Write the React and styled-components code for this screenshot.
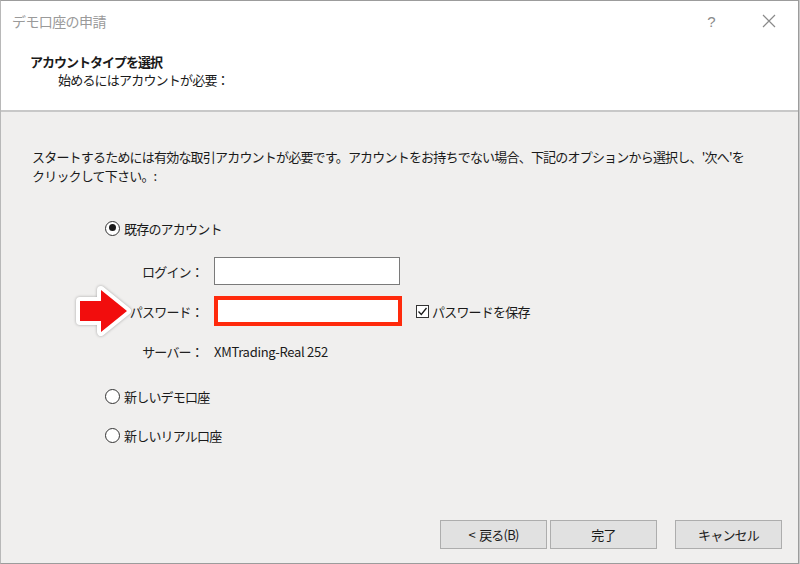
import React from "react";
import styled, { createGlobalStyle } from "styled-components";

const GlobalStyle = createGlobalStyle`
  html, body {
    margin: 0;
    padding: 0;
    background: #c9c9c9;
  }
  body {
    font-family: "Noto Sans CJK JP", "Noto Sans", sans-serif;
    font-size: 13px;
    color: #1a1a1a;
  }
`;

export default function App() {
  return (
    <>
      <GlobalStyle />
      <Window>
        <TitleBar>
          <Title>デモ口座の申請</Title>
          <TitleButtons>
            <HelpButton>?</HelpButton>
            <CloseButton>
              <svg width="14" height="14" viewBox="0 0 14 14">
                <path d="M1 1 L13 13 M13 1 L1 13" stroke="#8a8a8a" strokeWidth="1.2" />
              </svg>
            </CloseButton>
          </TitleButtons>
        </TitleBar>

        <Header>
          <Heading>アカウントタイプを選択</Heading>
          <SubHeading>始めるにはアカウントが必要：</SubHeading>
        </Header>

        <Body>
          <Intro>
            スタートするためには有効な取引アカウントが必要です。アカウントをお持ちでない場合、下記のオプションから選択し、'次へ'を
            <br />
            クリックして下さい。:
          </Intro>

          <Options>
            <RadioRow>
              <Radio checked />
              <span>既存のアカウント</span>
            </RadioRow>

            <Form>
              <FieldRow>
                <Label>ログイン：</Label>
                <Input />
              </FieldRow>
              <FieldRow $tall>
                <Arrow viewBox="0 0 60 50" width="60" height="50">
                  <path
                    d="M6 15 L27 15 L27 4 L53 25 L27 46 L27 35 L6 35 Z"
                    fill="#f20d0d"
                    stroke="#ffffff"
                    strokeWidth="8"
                    strokeLinejoin="round"
                    paintOrder="stroke"
                  />
                </Arrow>
                <Label>パスワード：</Label>
                <Input $highlight />
                <CheckRow>
                  <CheckBox>
                    <svg width="11" height="11" viewBox="0 0 11 11">
                      <path d="M1.5 5.5 L4.3 8.5 L9.5 2" fill="none" stroke="#1a1a1a" strokeWidth="1.3" />
                    </svg>
                  </CheckBox>
                  <span>パスワードを保存</span>
                </CheckRow>
              </FieldRow>
              <FieldRow>
                <Label>サーバー：</Label>
                <Value>XMTrading-Real 252</Value>
              </FieldRow>
            </Form>

            <RadioRow $gap={10}>
              <Radio />
              <span>新しいデモ口座</span>
            </RadioRow>
            <RadioRow $gap={19}>
              <Radio />
              <span>新しいリアル口座</span>
            </RadioRow>
          </Options>
        </Body>

        <Footer>
          <Button>&lt;&nbsp;&nbsp;戻る(B)</Button>
          <Button>完了</Button>
          <Button $spaced>キャンセル</Button>
        </Footer>
      </Window>
    </>
  );
}

const Window = styled.div`
  width: 797px;
  height: 562px;
  border: 1px solid #9c9c9c;
  border-left-color: #b8b8b8;
  background: #f0efee;
  display: flex;
  flex-direction: column;
  letter-spacing: -0.8px;
`;

const TitleBar = styled.div`
  height: 40px;
  background: #ffffff;
  display: flex;
  align-items: center;
  justify-content: space-between;
  padding: 0 0 0 11px;
`;

const Title = styled.div`
  font-size: 14px;
  color: #9a9a9a;
  letter-spacing: -0.6px;
`;

const TitleButtons = styled.div`
  display: flex;
  align-items: center;
`;

const HelpButton = styled.div`
  width: 56px;
  text-align: center;
  font-family: "Liberation Sans", sans-serif;
  font-size: 15px;
  color: #8a8a8a;
  margin-right: 2px;
`;

const CloseButton = styled.div`
  width: 56px;
  display: flex;
  justify-content: center;
  margin-right: 1px;
`;

const Header = styled.div`
  background: #ffffff;
  border-bottom: 2px solid #c8c8c8;
  padding: 11px 0 0 29px;
  box-sizing: border-box;
  height: 71px;
`;

const Heading = styled.div`
  font-weight: bold;
  line-height: 19px;
  letter-spacing: -1px;
`;

const SubHeading = styled.div`
  line-height: 18px;
  padding-left: 28px;
`;

const Body = styled.div`
  flex: 1;
  padding: 35px 0 0 31px;
`;

const Intro = styled.div`
  line-height: 19px;
`;

const Options = styled.div`
  padding: 33px 0 0 73px;
  display: flex;
  flex-direction: column;
`;

const RadioRow = styled.div`
  display: flex;
  align-items: center;
  gap: 4px;
  height: 20px;
  margin-top: ${(p) => p.$gap || 0}px;
`;

const Radio = styled.span`
  width: 15px;
  height: 15px;
  box-sizing: border-box;
  border: 1.5px solid #333333;
  border-radius: 50%;
  background: #ffffff;
  position: relative;
  &::after {
    content: "";
    display: ${(p) => (p.checked ? "block" : "none")};
    position: absolute;
    left: 2.5px;
    top: 2.5px;
    width: 7px;
    height: 7px;
    border-radius: 50%;
    background: #1a1a1a;
  }
`;

const Form = styled.div`
  display: flex;
  flex-direction: column;
  margin-top: 19px;
  padding-left: 1px;
`;

const FieldRow = styled.div`
  display: flex;
  align-items: center;
  height: ${(p) => (p.$tall ? 30 : 28)}px;
  margin-bottom: 11px;
  position: relative;
`;

const Label = styled.div`
  width: 108px;
  text-align: right;
  padding-right: 11px;
  box-sizing: border-box;
  color: #222;
`;

const Input = styled.div`
  width: 186px;
  height: 28px;
  box-sizing: border-box;
  background: #ffffff;
  border: ${(p) => (p.$highlight ? "4px solid #ff2a0c" : "1px solid #7a7a7a")};
  ${(p) => p.$highlight && "width: 188px; height: 30px;"}
`;

const Value = styled.div`
  letter-spacing: -0.3px;
`;

const CheckRow = styled.div`
  display: flex;
  align-items: center;
  gap: 3px;
  margin-left: 14px;
`;

const CheckBox = styled.span`
  width: 13px;
  height: 13px;
  box-sizing: border-box;
  border: 1px solid #333333;
  background: #ffffff;
  display: flex;
  align-items: center;
  justify-content: center;
`;

const Arrow = styled.svg`
  position: absolute;
  left: -32px;
  top: -10px;
  filter: drop-shadow(0 0 1.5px rgba(0, 0, 0, 0.3));
`;

const Footer = styled.div`
  display: flex;
  align-items: center;
  padding: 0 15px 14px 439px;
  gap: 3px;
`;

const Button = styled.button`
  width: 107px;
  height: 29px;
  margin-left: ${(p) => (p.$spaced ? 15 : 0)}px;
  background: #e1e1e1;
  border: 1px solid #adadad;
  font-family: inherit;
  font-size: 13px;
  letter-spacing: -0.8px;
  color: #1a1a1a;
  padding: 0;
`;
